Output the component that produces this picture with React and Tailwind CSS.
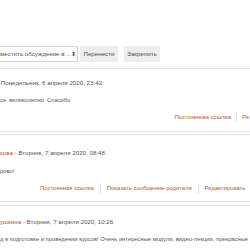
export default function App() {
  const link = "text-[#b35a30]";
  return (
    <div className="w-[250px] h-[250px] overflow-hidden bg-white font-['Liberation_Sans',Arial,sans-serif] text-[6.2px] text-[#555] leading-none">
      <div className="h-[46px]" />
      <div className="flex items-center h-[16px]">
        <div className="w-[78px] h-[16px] border border-[#ced4da] border-l-0 flex items-center justify-between pr-[3px] bg-white">
          <span className="whitespace-nowrap">местить обсуждение в ...</span>
          <span className="text-[6px] text-[#555]">⬍</span>
        </div>
        <div className="ml-[2px] w-[38px] h-[16px] bg-[#ebedef] flex items-center justify-center">Перенести</div>
        <div className="ml-[6px] w-[36px] h-[16px] bg-[#ebedef] flex items-center justify-center">Закрепить</div>
      </div>
      <div className="h-[6px]" />
      {/* Post 1 */}
      <div className="border-t border-b border-[#e3e3e3] h-[64px] flex flex-col">
        <div className="h-[9px]" />
        <div className="h-[10px] flex items-center whitespace-nowrap ml-[-3px]">- Понедельник, 6 апреля 2020, 23:42</div>
        <div className="h-[8px]" />
        <div className="h-[10px] flex items-center whitespace-nowrap text-[5.8px]">се&nbsp;&nbsp;великолепно&nbsp;&nbsp;Спасибо</div>
        <div className="h-[6px]" />
        <div className="h-[10px] flex items-center justify-end whitespace-nowrap">
          <span className={link}>Постоянная ссылка</span>
          <span className="w-px h-[10px] bg-[#ddd] mx-[5px]" />
          <span className={`${link} w-[8px] overflow-hidden`}>Ре</span>
        </div>
      </div>
      <div className="h-[2px]" />
      {/* Post 2 */}
      <div className="border-t border-b border-[#e3e3e3] h-[68px] flex flex-col">
        <div className="h-[13px]" />
        <div className="h-[10px] flex items-center whitespace-nowrap"><span className={link}>кова</span>&nbsp;- Вторник, 7 апреля 2020, 08:48</div>
        <div className="h-[9px]" />
        <div className="h-[10px] flex items-center whitespace-nowrap text-[5.8px]">рово!</div>
        <div className="h-[7px]" />
        <div className="h-[10px] flex items-center whitespace-nowrap pl-[40px] text-[5.9px]">
          <span className={link}>Постоянная ссылка</span>
          <span className="w-px h-[10px] bg-[#ddd] mx-[6px]" />
          <span className={link}>Показать сообщение-родителя</span>
          <span className="w-px h-[10px] bg-[#ddd] mx-[6px]" />
          <span className={link}>Редактировать</span>
        </div>
      </div>
      <div className="h-[3px]" />
      {/* Post 3 */}
      <div className="border-t border-[#e3e3e3] flex flex-col">
        <div className="h-[11px]" />
        <div className="h-[10px] flex items-center whitespace-nowrap"><span className={link}>ушкина</span>&nbsp;- Вторник, 7 апреля 2020, 10:26</div>
        <div className="h-[8px]" />
        <div className="h-[10px] flex items-center whitespace-nowrap text-[5.8px] overflow-hidden">д в подготовке и проведении курсов! Очень интересные модули, видео-лекции, прекрасные</div>
      </div>
    </div>
  );
}
